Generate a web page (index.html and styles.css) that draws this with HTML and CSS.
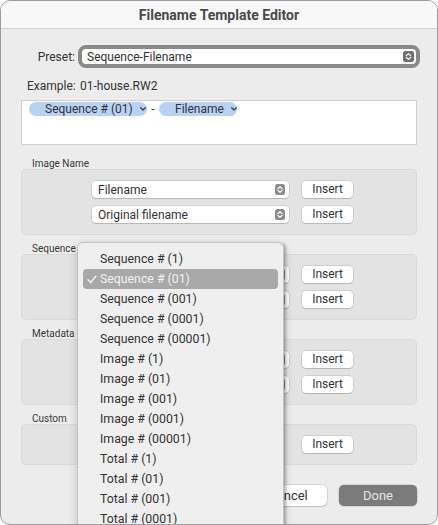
FILE: index.html
```html
<!DOCTYPE html>
<html>
<head>
<meta charset="utf-8">
<link rel="stylesheet" href="styles.css">
</head>
<body>
<div class="window">
  <div class="titlebar">Filename Template Editor</div>
  <div class="content">
    <div class="preset-row">
      <span class="preset-label">Preset:</span>
      <div class="preset-popup">
        <span>Sequence-Filename</span>
        <svg class="stepper dark" width="11" height="11" viewBox="0 0 11 11"><rect width="11" height="11" rx="2.5"/><path d="M3.3 4.6 L5.5 2.6 L7.7 4.6 M3.3 6.4 L5.5 8.4 L7.7 6.4"/></svg>
      </div>
    </div>
    <div class="example-row"><span class="ex-label">Example:</span><span>01-house.RW2</span></div>
    <div class="token-field">
      <span class="chip chip-seq">Sequence # (01)<svg class="chev" width="6" height="4" viewBox="0 0 6 4"><path d="M0.7 0.8 L3 3 L5.3 0.8"/></svg></span>
      <span class="dash">-</span>
      <span class="chip chip-file">Filename<svg class="chev" width="6" height="4" viewBox="0 0 6 4"><path d="M0.7 0.8 L3 3 L5.3 0.8"/></svg></span>
    </div>

    <div class="group-label first">Image Name</div>
    <div class="group">
      <div class="row">
        <div class="popup"><span>Filename</span><svg class="stepper" width="10" height="11" viewBox="0 0 10 11"><rect width="10" height="11" rx="2.5"/><path d="M2.9 4.6 L5 2.7 L7.1 4.6 M2.9 6.4 L5 8.3 L7.1 6.4"/></svg></div>
        <div class="btn">Insert</div>
      </div>
      <div class="row">
        <div class="popup"><span>Original filename</span><svg class="stepper" width="10" height="11" viewBox="0 0 10 11"><rect width="10" height="11" rx="2.5"/><path d="M2.9 4.6 L5 2.7 L7.1 4.6 M2.9 6.4 L5 8.3 L7.1 6.4"/></svg></div>
        <div class="btn">Insert</div>
      </div>
    </div>

    <div class="group-label">Sequence</div>
    <div class="group">
      <div class="row">
        <div class="popup"><span></span><svg class="stepper" width="10" height="11" viewBox="0 0 10 11"><rect width="10" height="11" rx="2.5"/><path d="M2.9 4.6 L5 2.7 L7.1 4.6 M2.9 6.4 L5 8.3 L7.1 6.4"/></svg></div>
        <div class="btn">Insert</div>
      </div>
      <div class="row">
        <div class="popup"><span></span><svg class="stepper" width="10" height="11" viewBox="0 0 10 11"><rect width="10" height="11" rx="2.5"/><path d="M2.9 4.6 L5 2.7 L7.1 4.6 M2.9 6.4 L5 8.3 L7.1 6.4"/></svg></div>
        <div class="btn">Insert</div>
      </div>
    </div>

    <div class="group-label">Metadata</div>
    <div class="group">
      <div class="row">
        <div class="popup"><span></span><svg class="stepper" width="10" height="11" viewBox="0 0 10 11"><rect width="10" height="11" rx="2.5"/><path d="M2.9 4.6 L5 2.7 L7.1 4.6 M2.9 6.4 L5 8.3 L7.1 6.4"/></svg></div>
        <div class="btn">Insert</div>
      </div>
      <div class="row">
        <div class="popup"><span></span><svg class="stepper" width="10" height="11" viewBox="0 0 10 11"><rect width="10" height="11" rx="2.5"/><path d="M2.9 4.6 L5 2.7 L7.1 4.6 M2.9 6.4 L5 8.3 L7.1 6.4"/></svg></div>
        <div class="btn">Insert</div>
      </div>
    </div>

    <div class="group-label">Custom</div>
    <div class="group">
      <div class="row">
        <div class="spacer"></div>
        <div class="btn">Insert</div>
      </div>
    </div>

    <div class="footer">
      <div class="btn big cancel">Cancel</div>
      <div class="btn big done">Done</div>
    </div>
  </div>

  <div class="menu">
    <div class="item">Sequence # (1)</div>
    <div class="item selected"><svg class="check" width="10" height="9" viewBox="0 0 10 9"><path d="M1 4.8 L3.7 7.6 L8.8 1.2"/></svg>Sequence # (01)</div>
    <div class="item">Sequence # (001)</div>
    <div class="item">Sequence # (0001)</div>
    <div class="item">Sequence # (00001)</div>
    <div class="item">Image # (1)</div>
    <div class="item">Image # (01)</div>
    <div class="item">Image # (001)</div>
    <div class="item">Image # (0001)</div>
    <div class="item">Image # (00001)</div>
    <div class="item">Total # (1)</div>
    <div class="item">Total # (01)</div>
    <div class="item">Total # (001)</div>
    <div class="item">Total # (0001)</div>
  </div>
</div>
</body>
</html>
```
FILE: styles.css
```css
* { box-sizing: border-box; }
html, body { margin: 0; padding: 0; background: #ffffff; }
body {
  width: 438px;
  height: 525px;
  overflow: hidden;
  font-family: Roboto, "Liberation Sans", sans-serif;
  font-size: 12px;
  color: #333333;
}
.window {
  position: relative;
  width: 438px;
  height: 525px;
  border: 1px solid #9c9c9c;
  border-radius: 10px;
  background: #ececec;
  overflow: hidden;
  display: flex;
  flex-direction: column;
}
.titlebar {
  height: 28px;
  flex: none;
  background: #f8f8f8;
  border-bottom: 1px solid #d2d2d2;
  display: flex;
  align-items: center;
  justify-content: center;
  font-weight: 700;
  font-size: 14px;
  color: #4a4a4a;
  padding-top: 1px;
}
.content {
  display: flex;
  flex-direction: column;
  padding: 0 19px 0 19px;
}
.preset-row {
  margin-top: 16px;
  display: flex;
  align-items: center;
  height: 23px;
}
.preset-label {
  width: 55px;
  text-align: right;
  margin-right: 3px;
}
.preset-popup {
  width: 342px;
  height: 23px;
  border: 4px solid #8a8a8a;
  border-radius: 8px;
  background: #ffffff;
  display: flex;
  align-items: center;
  justify-content: space-between;
  padding: 0 2px 0 5px;
  margin-right: -2px;
}
.stepper rect { fill: #8c8c8c; }
.stepper.dark rect { fill: #6f6f6f; }
.stepper path { fill: none; stroke: #ffffff; stroke-width: 1.2; stroke-linecap: round; stroke-linejoin: round; }
.example-row {
  margin-top: 11px;
  height: 15px;
  line-height: 15px;
  padding-left: 7px;
  display: flex;
}
.ex-label { width: 53px; }
.token-field {
  margin-top: 6px;
  height: 45px;
  background: #ffffff;
  border: 1px solid #d0d0d0;
  margin-left: 1px;
  margin-right: 1px;
  padding: 1px 0 0 7px;
  display: flex;
  align-items: flex-start;
}
.chip {
  height: 14px;
  line-height: 14px;
  background: #b7d2f5;
  border-radius: 7px;
  display: inline-flex;
  align-items: center;
  padding-left: 16px;
}
.chip-seq { width: 118px; }
.chip-file { width: 78px; }
.chev { margin-left: 7px; }
.chev path { fill: none; stroke: #3a3a3a; stroke-width: 1.3; stroke-linecap: round; stroke-linejoin: round; }
.dash { width: 12px; text-align: center; line-height: 14px; }
.group-label {
  font-size: 10px;
  line-height: 10px;
  height: 10px;
  padding-left: 12px;
  margin-top: 9px;
  color: #383838;
}
.group-label.first { margin-top: 14px; }
.group {
  background: #e3e3e3;
  border: 1px solid #d9d9d9;
  border-radius: 5px;
  margin: 0 1px;
  padding: 11px 0 11px 70px;
  display: flex;
  flex-direction: column;
  gap: 8px;
}
.row {
  display: flex;
  align-items: center;
  height: 17px;
  gap: 13px;
}
.popup {
  width: 197px;
  height: 17px;
  background: #ffffff;
  border-radius: 4px;
  box-shadow: 0 0 0 0.5px rgba(0,0,0,0.18), 0 1px 1px rgba(0,0,0,0.12);
  display: flex;
  align-items: center;
  justify-content: space-between;
  padding: 0 4px 0 6px;
}
.spacer { width: 197px; height: 17px; }
.btn {
  width: 51px;
  height: 17px;
  background: #ffffff;
  border-radius: 4px;
  box-shadow: 0 0 0 0.5px rgba(0,0,0,0.18), 0 1px 1px rgba(0,0,0,0.12);
  display: flex;
  align-items: center;
  justify-content: center;
  padding-bottom: 1px;
}
.footer {
  margin-top: 20px;
  display: flex;
  justify-content: flex-end;
  gap: 12px;
  padding-right: 1px;
}
.btn.big {
  width: 78px;
  height: 21px;
  font-size: 13px;
  border-radius: 5px;
}
.btn.done {
  background: #7b7b7b;
  color: #e4e4e4;
  box-shadow: 0 0 0 0.5px rgba(0,0,0,0.2);
}
.menu {
  position: absolute;
  left: 76px;
  top: 241px;
  width: 207px;
  height: 300px;
  background: #efefef;
  border: 1px solid #c3c3c3;
  border-radius: 6px;
  box-shadow: 0 3px 10px rgba(0,0,0,0.18), 4px 0 3px -2px rgba(0,0,0,0.25);
  padding: 6px 5px 0 5px;
}
.item {
  height: 20px;
  line-height: 20px;
  padding-left: 17px;
  font-size: 12.3px;
  border-radius: 4px;
  position: relative;
}
.item.selected {
  background: #a8a8a8;
  color: #f2f2f2;
}
.check {
  position: absolute;
  left: 4px;
  top: 6px;
}
.check path { fill: none; stroke: #f2f2f2; stroke-width: 1.5; stroke-linecap: round; stroke-linejoin: round; }
```
